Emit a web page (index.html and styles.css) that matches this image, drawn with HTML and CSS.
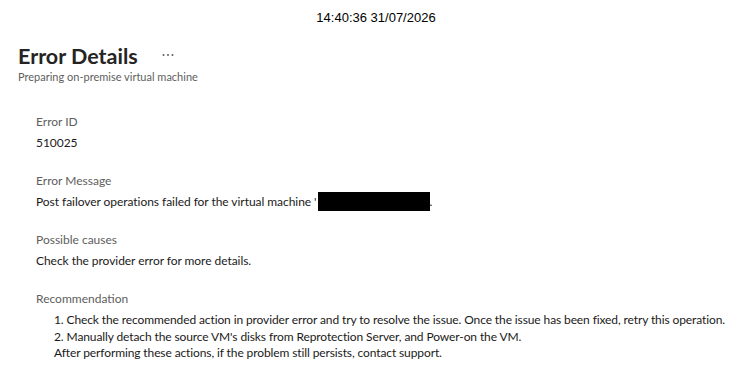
FILE: index.html
```html
<!DOCTYPE html>
<html>
<head>
<meta charset="utf-8">
<link rel="stylesheet" href="styles.css">
</head>
<body>
<div class="stamp">14:40:36 31/07/2026</div>
<header class="head">
  <div class="title-row">
    <h1 class="title">Error Details</h1>
    <svg class="more" width="12" height="4" viewBox="0 0 12 4" aria-label="More"><circle cx="1.5" cy="2" r="1" fill="#605e5c"/><circle cx="6" cy="2" r="1" fill="#605e5c"/><circle cx="10.5" cy="2" r="1" fill="#605e5c"/></svg>
  </div>
  <div class="subtitle">Preparing on-premise virtual machine</div>
</header>
<main class="content">
  <section class="field">
    <div class="label">Error ID</div>
    <div class="value">510025</div>
  </section>
  <section class="field">
    <div class="label">Error Message</div>
    <div class="value">Post failover operations failed for the virtual machine '<span class="redact"></span>.</div>
  </section>
  <section class="field">
    <div class="label">Possible causes</div>
    <div class="value">Check the provider error for more details.</div>
  </section>
  <section class="field">
    <div class="label">Recommendation</div>
    <div class="value rec">
      <div>1. Check the recommended action in provider error and try to resolve the issue. Once the issue has been fixed, retry this operation.</div>
      <div>2. Manually detach the source VM's disks from Reprotection Server, and Power-on the VM.</div>
      <div>After performing these actions, if the problem still persists, contact support.</div>
    </div>
  </section>
</main>
</body>
</html>
```

FILE: styles.css
```css
html, body {
  margin: 0;
  padding: 0;
  background: #fff;
}
body {
  font-family: Lato, "Open Sans", sans-serif;
  color: #323130;
}
.stamp {
  font-family: "Liberation Sans", Arial, sans-serif;
  font-size: 13px;
  color: #000;
  text-align: center;
  padding-top: 10px;
  line-height: 15px;
}
.head {
  padding: 18px 0 0 18px;
}
.title-row {
  display: flex;
  align-items: center;
  gap: 24px;
}
.title {
  margin: 0;
  font-size: 21.5px;
  font-weight: 700;
  line-height: 26px;
  color: #252423;
}
.more {
  display: block;
  margin-top: -2px;
}
.subtitle {
  font-size: 11px;
  line-height: 15px;
  color: #605e5c;
}
.content {
  padding: 28px 0 0 36px;
  display: flex;
  flex-direction: column;
  gap: 17px;
}
.label {
  font-size: 12px;
  line-height: 20px;
  color: #605e5c;
}
.value {
  font-size: 12px;
  line-height: 22px;
  color: #1b1a19;
  letter-spacing: -0.05px;
}
.rec {
  padding-left: 18px;
  line-height: 16.5px;
  margin-top: 3px;
  letter-spacing: -0.11px;
}
.redact {
  display: inline-block;
  width: 112px;
  height: 19px;
  margin-left: 1px;
  background: #000;
  vertical-align: -5px;
}
```
